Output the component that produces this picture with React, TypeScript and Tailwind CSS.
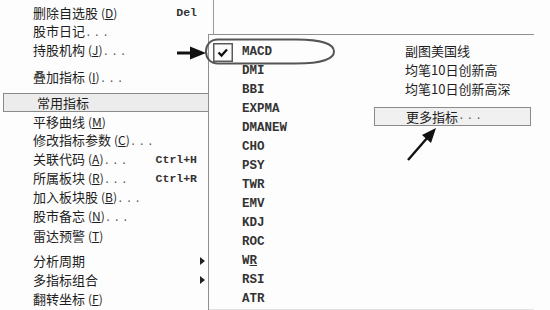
import React from 'react';

type Item = { label: string; key?: string; dots?: boolean; shortcut?: string; sub?: boolean; gap?: string; active?: boolean };

const mainItems: Item[] = [
  { label: '删除自选股', key: 'D', shortcut: 'Del' },
  { label: '股市日记', dots: true },
  { label: '持股机构', key: 'J', dots: true },
  { label: '叠加指标', key: 'I', dots: true, gap: 'mt-[8px]' },
  { label: '常用指标', gap: 'mt-[6px]', active: true },
  { label: '平移曲线', key: 'M' },
  { label: '修改指标参数', key: 'C', dots: true },
  { label: '关联代码', key: 'A', dots: true, shortcut: 'Ctrl+H' },
  { label: '所属板块', key: 'R', dots: true, shortcut: 'Ctrl+R' },
  { label: '加入板块股', key: 'B', dots: true },
  { label: '股市备忘', key: 'N', dots: true },
  { label: '雷达预警', key: 'T' },
  { label: '分析周期', sub: true, gap: 'mt-[6px]' },
  { label: '多指标组合', sub: true },
  { label: '翻转坐标', key: 'F' },
];

const indicators = ['MACD', 'DMI', 'BBI', 'EXPMA', 'DMANEW', 'CHO', 'PSY', 'TWR', 'EMV', 'KDJ', 'ROC', 'WR', 'RSI', 'ATR'];

const cjk = "font-['Noto_Sans_CJK_SC',sans-serif]";
const mono = "font-['Liberation_Mono',monospace]";

function MainRow({ item }: { item: Item }) {
  return (
    <div
      className={`flex items-center h-[19px] pl-[33px] pr-[16px] ${item.gap ?? ''} ${
        item.active ? 'ml-[3px] pl-[29px] bg-[#ececec] border border-[#8a8a8a]' : ''
      }`}
    >
      <span className={`${cjk} text-[13px] leading-none text-[#1e1e1e] whitespace-nowrap`}>
        {item.label}
        {item.key && (
          <span className="text-[12px] ml-[3px]">
            (<span className="underline">{item.key}</span>)
          </span>
        )}
        {item.dots && <span className={`${mono} text-[11px] text-[#555] tracking-[2px]`}>...</span>}
      </span>
      <span className="flex-1" />
      {item.shortcut && <span className={`${mono} font-bold text-[11.5px] text-[#333]`}>{item.shortcut}</span>}
      {item.sub && (
        <svg width="5" height="8" viewBox="0 0 5 8" className="mr-[-8px]">
          <polygon points="0,0 5,4 0,8" fill="#222" />
        </svg>
      )}
    </div>
  );
}

function CheckBox() {
  return (
    <svg width="20" height="19" viewBox="0 0 20 19" className="shrink-0">
      <rect x="0.75" y="0.75" width="18.5" height="17.5" fill="#fdfdfd" stroke="#5a5a5a" strokeWidth="1.5" />
      <path d="M5.5 9.5 L8.5 12.5 L14 6.5" stroke="#111" strokeWidth="2.3" fill="none" />
    </svg>
  );
}

export default function App() {
  return (
    <div className="relative w-[550px] h-[310px] overflow-hidden bg-[#fdfdfd]">
      {/* main context menu */}
      <div className="w-[214px] h-[310px] pt-[3px] border-r border-[#9a9a9a]">
        {mainItems.map((item) => (
          <MainRow key={item.label} item={item} />
        ))}
      </div>

      {/* 常用指标 submenu */}
      <div className="absolute left-[208px] top-[34px] w-[326px] h-[276px] bg-[#fdfdfd] border-l border-t border-[#8f8f8f] flex">
        <div className="w-[162px] pt-[8px] border-b border-[#e2e2e2] h-[275px]">
          {indicators.map((name, i) => (
            <div key={name} className="flex items-center h-[19px]">
              <div className="w-[33px] h-[19px] flex items-center pl-[4px]">{i === 0 && <CheckBox />}</div>
              <span className={`${mono} font-bold text-[12.5px] leading-none text-[#333]`}>
                {name === 'WR' ? (
                  <>
                    W<span className="underline">R</span>
                  </>
                ) : (
                  name
                )}
              </span>
            </div>
          ))}
        </div>
        <div className="flex-1 pt-[6px] pr-[3px] border-b border-[#e2e2e2] h-[275px]">
          {['副图美国线', '均笔10日创新高', '均笔10日创新高深'].map((t) => (
            <div key={t} className={`h-[19px] flex items-center pl-[34px] ${cjk} text-[13px] text-[#1e1e1e]`}>
              {t}
            </div>
          ))}
          <div className="mt-[9px] ml-[3px] h-[19px] flex items-center pl-[31px] bg-[#f0f0f0] border border-[#8a8a8a]">
            <span className={`${cjk} text-[13px] text-[#1e1e1e]`}>更多指标</span>
            <span className={`${mono} text-[11px] text-[#555] tracking-[2px]`}>...</span>
          </div>
        </div>
      </div>

      {/* annotations drawn on the scan */}
      <svg className="absolute left-0 top-0 pointer-events-none" width="550" height="310" viewBox="0 0 550 310">
        <path
          d="M218 39.5 L296 39.5 C324 39.5 334 45 334 51.5 C334 58 324 63.5 296 63.5 L218 63.5 C210 63.5 206 58 206 51.5 C206 45 210 39.5 218 39.5 Z"
          fill="none"
          stroke="#555"
          strokeWidth="2"
        />
        <line x1="177" y1="53" x2="193" y2="53" stroke="#111" strokeWidth="3" />
        <polygon points="190,46.5 206,53 190,59.5" fill="#111" />
        <line x1="408" y1="160" x2="428" y2="137" stroke="#111" strokeWidth="2.4" />
        <polygon points="436,128 431,143 422,135" fill="#111" />
      </svg>
    </div>
  );
}
